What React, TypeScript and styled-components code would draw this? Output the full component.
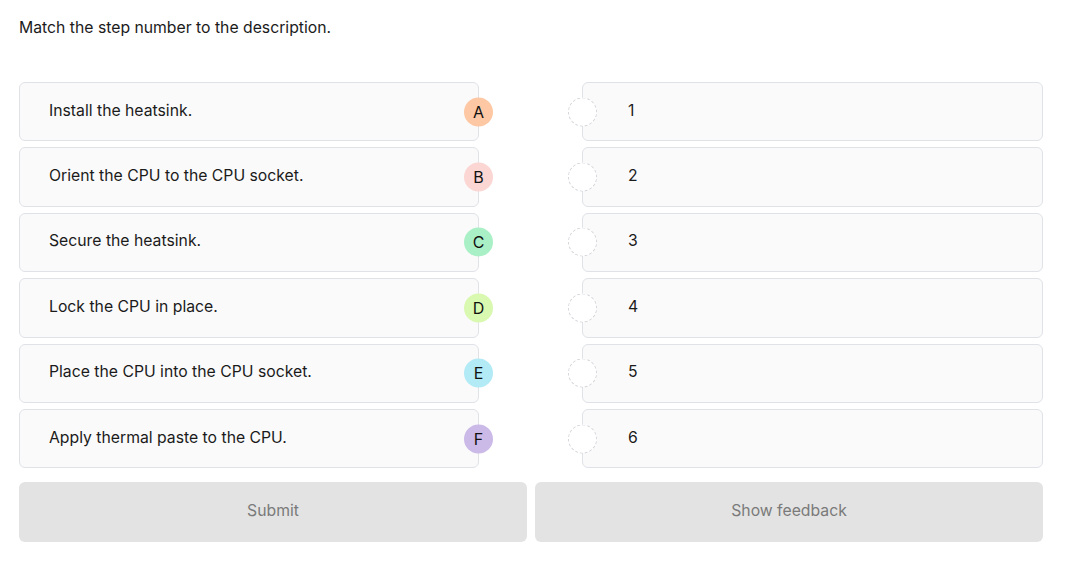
import React from "react";
import styled, { createGlobalStyle } from "styled-components";

const GlobalStyle = createGlobalStyle`
  html, body { margin: 0; padding: 0; background: #ffffff; }
  body { font-family: Inter, "Noto Sans", sans-serif; color: #1a1a1a; }
`;

const Page = styled.div`
  padding: 16px 28px 0 19px;
  width: 1024px;
`;

const Prompt = styled.p`
  margin: 0;
  font-size: 15.75px;
  line-height: 23px;
  color: #1b1b1b;
`;

const Board = styled.div`
  margin-top: 43px;
  display: grid;
  grid-template-columns: 460px 461px;
  column-gap: 103px;
  row-gap: 6px;
`;

const Card = styled.div<{ $side: "left" | "right" }>`
  position: relative;
  height: 59.4px;
  box-sizing: border-box;
  border: 1px solid #dfe2e7;
  border-radius: 6px;
  background: #fafafa;
  display: flex;
  align-items: center;
  padding-left: ${(p) => (p.$side === "left" ? "29px" : "45px")};
  padding-bottom: 3px;
  font-size: 15.75px;
  color: #1b1b1b;
`;

const Badge = styled.span<{ $bg: string }>`
  position: absolute;
  right: -15px;
  top: 50%;
  transform: translateY(-50%);
  width: 29px;
  height: 29px;
  border-radius: 50%;
  background: ${(p) => p.$bg};
  display: flex;
  align-items: center;
  justify-content: center;
  padding-bottom: 1px;
  box-sizing: border-box;
  font-size: 16px;
  color: #111;
`;

const Slot = styled.span`
  position: absolute;
  left: -15px;
  top: 50%;
  transform: translateY(-50%);
  width: 29px;
  height: 29px;
  box-sizing: border-box;
  border-radius: 50%;
  border: 1px dashed #d4d6da;
  background: #ffffff;
`;

const Actions = styled.div`
  margin-top: 14px;
  display: grid;
  grid-template-columns: 1fr 1fr;
  column-gap: 8px;
`;

const Button = styled.button`
  height: 60px;
  padding: 0 0 3px;
  border: none;
  border-radius: 6px;
  background: #e3e3e3;
  color: #7a7a7a;
  font-family: Inter, "Noto Sans", sans-serif;
  font-size: 15.75px;
  cursor: default;
`;

const items = [
  { text: "Install the heatsink.", letter: "A", color: "#fdc8a3" },
  { text: "Orient the CPU to the CPU socket.", letter: "B", color: "#fbd6d3" },
  { text: "Secure the heatsink.", letter: "C", color: "#aaf0c6" },
  { text: "Lock the CPU in place.", letter: "D", color: "#d9f8b0" },
  { text: "Place the CPU into the CPU socket.", letter: "E", color: "#b2eaf6" },
  { text: "Apply thermal paste to the CPU.", letter: "F", color: "#cbb9e7" },
];

export default function App() {
  return (
    <>
      <GlobalStyle />
      <Page>
        <Prompt>Match the step number to the description.</Prompt>
        <Board>
          {items.map((it, i) => (
            <React.Fragment key={it.letter}>
              <Card $side="left">
                {it.text}
                <Badge $bg={it.color}>{it.letter}</Badge>
              </Card>
              <Card $side="right">
                <Slot />
                {i + 1}
              </Card>
            </React.Fragment>
          ))}
        </Board>
        <Actions>
          <Button>Submit</Button>
          <Button>Show feedback</Button>
        </Actions>
      </Page>
    </>
  );
}
